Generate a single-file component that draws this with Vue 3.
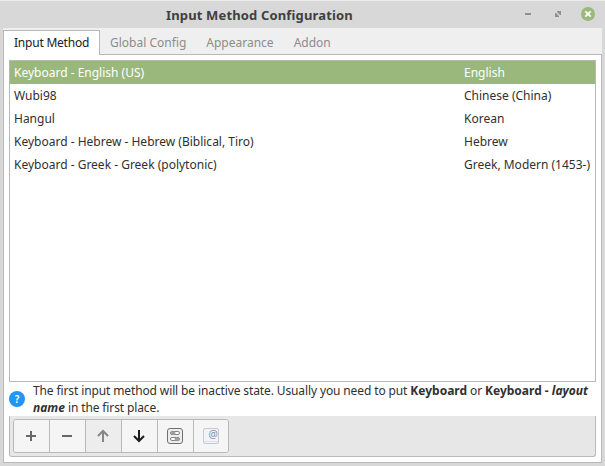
<script setup>
import { ref } from 'vue'

const tabs = ['Input Method', 'Global Config', 'Appearance', 'Addon']
const activeTab = ref(0)
const selected = ref(0)
const methods = [
  { name: 'Keyboard - English (US)', lang: 'English' },
  { name: 'Wubi98', lang: 'Chinese (China)' },
  { name: 'Hangul', lang: 'Korean' },
  { name: 'Keyboard - Hebrew - Hebrew (Biblical, Tiro)', lang: 'Hebrew' },
  { name: 'Keyboard - Greek - Greek (polytonic)', lang: 'Greek, Modern (1453-)' },
]
</script>

<template>
  <div class="window">
    <header class="titlebar">
      <h1 class="title">Input Method Configuration</h1>
      <div class="controls">
        <svg class="control" width="14" height="14" viewBox="0 0 14 14">
          <rect x="4" y="6" width="6" height="2" fill="#8f8f8f" />
        </svg>
        <svg class="control" width="14" height="14" viewBox="0 0 14 14">
          <path d="M6 4h4v4H9L6 5zM4 6h1l3 3v1H4z" fill="#8f8f8f" />
        </svg>
        <svg class="control" width="14" height="14" viewBox="0 0 14 14">
          <circle cx="7" cy="7" r="7" fill="#9ab87c" />
          <path d="M4.3 4.3l5.4 5.4M9.7 4.3l-5.4 5.4" stroke="#fff" stroke-width="1.8" />
        </svg>
      </div>
    </header>

    <div class="notebook">
      <nav class="tabs">
        <button
          v-for="(tab, i) in tabs"
          :key="tab"
          class="tab"
          :class="{ active: i === activeTab }"
          @click="activeTab = i"
        >{{ tab }}</button>
        <span class="tabs-fill"></span>
      </nav>

      <main class="page">
        <ul class="list">
          <li
            v-for="(m, i) in methods"
            :key="m.name"
            class="row"
            :class="{ selected: i === selected }"
            @click="selected = i"
          >
            <span class="name">{{ m.name }}</span>
            <span class="lang">{{ m.lang }}</span>
          </li>
        </ul>

        <div class="hint">
          <span class="help">?</span>
          <p class="hint-text">
            The first input method will be inactive state. Usually you need to put
            <b>Keyboard</b> or <b>Keyboard - <i>layout name</i></b> in the first place.
          </p>
        </div>

        <div class="toolbar">
          <div class="buttons">
            <button class="tool">
              <svg width="16" height="16" viewBox="0 0 16 16">
                <path d="M3 8h10M8 3v10" stroke="#686868" stroke-width="2" fill="none" />
              </svg>
            </button>
            <button class="tool">
              <svg width="16" height="16" viewBox="0 0 16 16">
                <path d="M3 8h10" stroke="#686868" stroke-width="2" />
              </svg>
            </button>
            <button class="tool disabled">
              <svg width="16" height="16" viewBox="0 0 16 16">
                <path d="M8 14V3.5M3 8l5-5 5 5" stroke="#858585" stroke-width="2" fill="none" />
              </svg>
            </button>
            <button class="tool">
              <svg width="16" height="16" viewBox="0 0 16 16">
                <path d="M8 2v10.5M3 8l5 5 5-5" stroke="#1c1c1c" stroke-width="2" fill="none" />
              </svg>
            </button>
            <button class="tool">
              <svg width="16" height="16" viewBox="0 0 16 16">
                <rect x=".5" y=".5" width="15" height="15" rx="2.5" fill="#ededed" stroke="#707070" />
                <rect x="3.5" y="3.5" width="9" height="3" rx="1.5" fill="#fff" stroke="#858585" />
                <rect x="3.5" y="3.5" width="5" height="3" rx="1.5" fill="#a0a0a0" />
                <rect x="3.5" y="9.5" width="9" height="3" rx="1.5" fill="#fff" stroke="#858585" />
                <rect x="7.5" y="9.5" width="5" height="3" rx="1.5" fill="#a0a0a0" />
              </svg>
            </button>
            <button class="tool">
              <svg width="16" height="16" viewBox="0 0 16 16">
                <rect x=".5" y=".5" width="15" height="15" rx="1.5" fill="#f2f3f5" stroke="#c5cad4" />
                <path d="M1 13.5h14" stroke="#dce0e7" />
                <text x="5.5" y="9.8" class="at">@</text>
              </svg>
            </button>
          </div>
        </div>
      </main>
    </div>
  </div>
</template>

<style>
body {
  margin: 0;
}
</style>

<style scoped>
.window {
  box-sizing: border-box;
  width: 605px;
  height: 466px;
  display: flex;
  flex-direction: column;
  padding: 0 3px 3px;
  border-top: 1px solid #ececec;
  background: #d8d8d8;
  font: 12px/17px "Noto Sans", sans-serif;
  color: #303030;
}
.titlebar {
  box-sizing: border-box;
  display: flex;
  align-items: center;
  height: 27px;
  padding-bottom: 1px;
  flex: none;
}
.title {
  margin: 1px 0 0 163px;
  flex: 1;
  font-size: 13px;
  line-height: 18px;
  font-weight: 700;
  letter-spacing: 0.15px;
  color: #404040;
}
.controls {
  display: flex;
  gap: 16px;
  padding-right: 7px;
}
.control {
  display: block;
}
.notebook {
  flex: 1;
  display: flex;
  flex-direction: column;
  background: #efefef;
}
.tabs {
  display: flex;
  height: 27px;
  flex: none;
}
.tab {
  box-sizing: border-box;
  height: 25px;
  margin: 2px 0 0;
  padding: 0 10px;
  border: 0 solid #b8b8b8;
  border-bottom-width: 1px;
  background: transparent;
  font: inherit;
  color: #8c8c8c;
  white-space: nowrap;
}
.tab.active {
  width: 97px;
  padding-bottom: 2px;
  letter-spacing: -0.22px;
  text-align: left;
  border-width: 1px 1px 0;
  background: #fff;
  color: #202020;
}
.tabs-fill {
  flex: 1;
  border-bottom: 1px solid #b8b8b8;
}
.page {
  flex: 1;
  display: flex;
  flex-direction: column;
  padding: 5px;
  border: 1px solid #b8b8b8;
  border-top: 0;
  background: #fff;
}
.list {
  box-sizing: border-box;
  height: 322px;
  margin: 0;
  padding: 0;
  list-style: none;
  border: 1px solid #b8b8b8;
}
.row {
  display: flex;
  height: 23px;
  line-height: 23px;
  padding-left: 4px;
  white-space: nowrap;
}
.row.selected {
  background: #9ab87c;
  color: #fff;
}
.name {
  width: 450px;
  flex: none;
}
.hint {
  display: flex;
  align-items: center;
  gap: 8px;
  height: 34px;
}
.help {
  flex: none;
  width: 16px;
  height: 16px;
  border-radius: 50%;
  background: #2196f3;
  color: #fff;
  font-size: 10px;
  line-height: 16px;
  font-weight: 600;
  text-align: center;
}
.hint-text {
  margin: 0;
  letter-spacing: -0.12px;
}
.hint-text b {
  letter-spacing: 0;
}
.toolbar {
  flex: 1;
  padding: 3px;
  border: 1px solid #b8b8b8;
  border-top: 0;
  border-radius: 0 0 3px 3px;
  background: #e7e7e7;
}
.buttons {
  display: inline-flex;
  border: 1px solid #b8b8b8;
  border-radius: 3px;
  overflow: hidden;
}
.tool {
  box-sizing: border-box;
  width: 36px;
  height: 32px;
  display: flex;
  align-items: center;
  justify-content: flex-start;
  padding: 0 0 0 9px;
  border: 0;
  border-right: 1px solid #b8b8b8;
  background: #f5f5f5;
}
.tool:last-child {
  width: 34px;
  border-right: 0;
}
.tool.disabled {
  background: #ededed;
}
.at {
  font: 10.5px "Noto Sans", sans-serif;
  fill: #8490a6;
}
</style>
